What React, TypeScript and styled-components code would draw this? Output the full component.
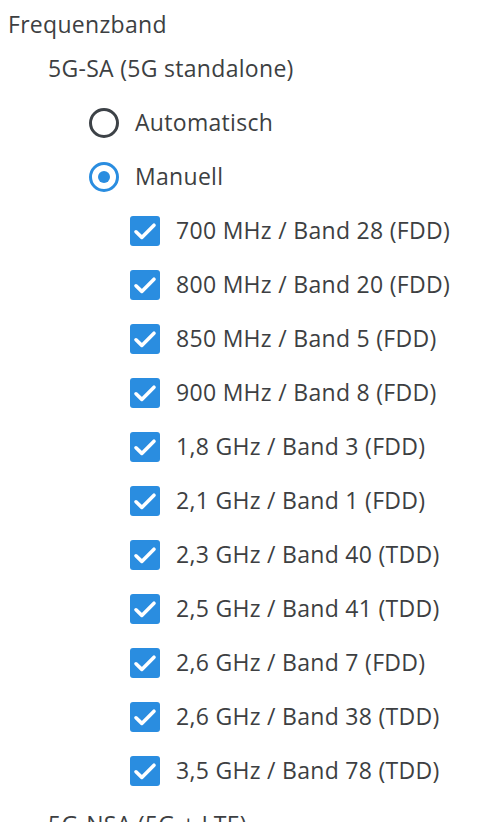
import React from "react";
import styled, { createGlobalStyle } from "styled-components";

const Global = createGlobalStyle`
  html, body { margin: 0; padding: 0; background: #ffffff; }
  body {
    padding: 8px 0 0 8px;
    font-family: "Open Sans", "Noto Sans", sans-serif;
    color: #3d3f42;
    overflow: hidden;
  }
`;

const Page = styled.div`
  display: flex;
  flex-direction: column;
  font-size: 23px;
  letter-spacing: 0.3px;
  line-height: 1.3;
`;

const Title = styled.div`
  height: 34px;
  display: flex;
  align-items: center;
`;

const Group = styled.div<{ $indent: number }>`
  display: flex;
  flex-direction: column;
  padding-left: ${(p) => p.$indent}px;
`;

const Row = styled.label`
  height: 54px;
  display: flex;
  align-items: center;
  gap: 16px;
  white-space: nowrap;
`;

const Radio = styled.span<{ $checked: boolean }>`
  box-sizing: border-box;
  width: 30px;
  height: 30px;
  flex: none;
  border-radius: 50%;
  border: 3px solid ${(p) => (p.$checked ? "#2a8de0" : "#3d4247")};
  display: flex;
  align-items: center;
  justify-content: center;
  &::after {
    content: "";
    display: ${(p) => (p.$checked ? "block" : "none")};
    width: 12px;
    height: 12px;
    border-radius: 50%;
    background: #2a8de0;
  }
`;

const Box = styled.span`
  width: 30px;
  height: 30px;
  flex: none;
  border-radius: 3px;
  background: #2a8de0;
  display: flex;
  align-items: center;
  justify-content: center;
`;

const Check = () => (
  <Box>
    <svg width="30" height="30" viewBox="0 0 30 30">
      <path
        d="M6 15.8 L11.8 21.4 L24 9.2"
        fill="none"
        stroke="#ffffff"
        strokeWidth="3.6"
        strokeLinecap="round"
        strokeLinejoin="round"
      />
    </svg>
  </Box>
);

const bands = [
  "700 MHz / Band 28 (FDD)",
  "800 MHz / Band 20 (FDD)",
  "850 MHz / Band 5 (FDD)",
  "900 MHz / Band 8 (FDD)",
  "1,8 GHz / Band 3 (FDD)",
  "2,1 GHz / Band 1 (FDD)",
  "2,3 GHz / Band 40 (TDD)",
  "2,5 GHz / Band 41 (TDD)",
  "2,6 GHz / Band 7 (FDD)",
  "2,6 GHz / Band 38 (TDD)",
  "3,5 GHz / Band 78 (TDD)",
];

export default function App() {
  return (
    <>
      <Global />
      <Page>
        <Title>Frequenzband</Title>
        <Group $indent={40}>
          <Row>5G-SA (5G standalone)</Row>
          <Group $indent={41}>
            <Row>
              <Radio $checked={false} />
              <span>Automatisch</span>
            </Row>
            <Row>
              <Radio $checked={true} />
              <span>Manuell</span>
            </Row>
            <Group $indent={41}>
              {bands.map((b) => (
                <Row key={b}>
                  <Check />
                  <span>{b}</span>
                </Row>
              ))}
            </Group>
          </Group>
          <Row>5G-NSA (5G + LTE)</Row>
        </Group>
      </Page>
    </>
  );
}
